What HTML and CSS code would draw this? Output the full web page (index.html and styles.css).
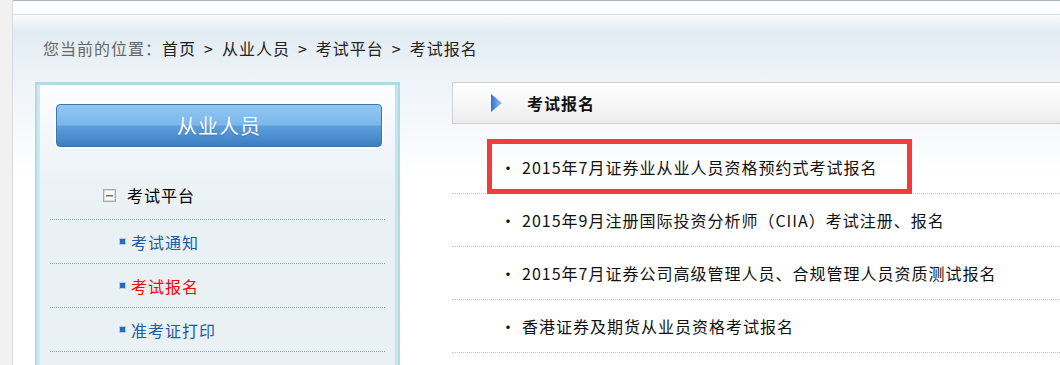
FILE: index.html
```html
<!DOCTYPE html>
<html>
  <head>
    <meta charset="utf-8">
    <title>考试报名</title>
    <link rel="stylesheet" href="styles.css">
  </head>
  <body>
    <div class="page">
      <div class="side-strip"></div>
      <div class="main">
        <div class="top-bar"></div>
        <div class="content">
          <div class="crumbs">
            <span class="crumbs-label">您当前的位置：</span>首页<span class="sep">&gt;</span>从业人员<span class="sep">&gt;</span>考试平台<span class="sep">&gt;</span>考试报名
          </div>
          <div class="columns">
            <div class="side-panel">
              <div class="panel-title">从业人员</div>
              <ul class="menu">
                <li class="menu-group">
                  <svg class="minus-icon" width="13" height="13" viewBox="0 0 13 13">
                    <rect x="0.5" y="0.5" width="12" height="12" fill="#fafafa" stroke="#a9a9a9"/>
                    <rect x="1.5" y="1.5" width="10" height="10" fill="none" stroke="#dcdcdc"/>
                    <rect x="3" y="6" width="7" height="1.5" fill="#6f6f6f"/>
                  </svg>
                  考试平台
                </li>
                <li class="menu-item"><span class="square"></span>考试通知</li>
                <li class="menu-item active"><span class="square"></span>考试报名</li>
                <li class="menu-item"><span class="square"></span>准考证打印</li>
              </ul>
            </div>
            <div class="content-col">
              <div class="col-header">
                <svg class="arrow" width="11" height="18" viewBox="0 0 11 18">
                  <defs>
                    <linearGradient id="arrowFill" x1="0" y1="0" x2="1" y2="0">
                      <stop offset="0" stop-color="#3470cc"/>
                      <stop offset="1" stop-color="#9ec2f2"/>
                    </linearGradient>
                  </defs>
                  <polygon points="0,0 11,9 0,18" fill="url(#arrowFill)"/>
                </svg>
                <span class="col-title">考试报名</span>
              </div>
              <ul class="news-list">
                <li class="news-row">
                  <span class="dot">·</span>2015年7月证券业从业人员资格预约式考试报名
                  <span class="mark"></span>
                </li>
                <li class="news-row"><span class="dot">·</span>2015年9月注册国际投资分析师（CIIA）考试注册、报名</li>
                <li class="news-row"><span class="dot">·</span>2015年7月证券公司高级管理人员、合规管理人员资质测试报名</li>
                <li class="news-row"><span class="dot">·</span>香港证券及期货从业员资格考试报名</li>
              </ul>
            </div>
          </div>
        </div>
      </div>
    </div>
  </body>
</html>
```

FILE: styles.css
```css
html,
body {
  margin: 0;
  padding: 0;
  overflow: hidden;
  background-color: #fff;
  font-family: "Noto Sans CJK SC", "Noto Sans", sans-serif;
  font-size: 16px;
  color: #222;
}

ul {
  margin: 0;
  padding: 0;
  list-style: none;
}

.page {
  display: flex;
  min-height: 365px;
}

.side-strip {
  width: 12px;
  flex-shrink: 0;
  background-color: #f1f1f1;
  border-right: 1px solid #dadada;
}

.main {
  flex: 1;
  min-width: 0;
  border-top: 1px solid #a8b7c3;
}

.top-bar {
  height: 13px;
  background-color: #fff;
  border-bottom: 1px solid #d4dce2;
}

.content {
  background: linear-gradient(to bottom, #f9fbfd 0, #e0ebf2 18px, #eaf1f6 45px, #f1f5f9 80px, #f7f9fb 120px, #fff 160px);
  padding-bottom: 40px;
}

.crumbs {
  padding: 22px 0 0 30px;
  height: 22px;
  line-height: 22px;
  margin-bottom: 23px;
  letter-spacing: 1px;
  color: #222;
  white-space: nowrap;
}

.crumbs-label {
  color: #666;
}

.sep {
  margin: 0 8px;
}

.columns {
  display: flex;
  padding-left: 22px;
  align-items: flex-start;
}

/* left panel */

.side-panel {
  width: 365px;
  min-height: 300px;
  box-sizing: border-box;
  flex-shrink: 0;
  border-style: solid;
  border-color: #b1dae6;
  border-width: 3px 2px 0;
  box-shadow: inset 3px 0 0 #cde9f0, inset -3px 0 0 #c4e5ee;
  background: linear-gradient(to bottom, #fdfefe 0, #f3f7fa 50px, #ebf2f6 100px, #e9f1f5 140px);
}

.panel-title {
  margin: 19px 16px 0 19px;
  height: 41px;
  line-height: 41px;
  text-align: center;
  color: #fff;
  font-size: 20px;
  letter-spacing: 1px;
  border: 1px solid #3b77b0;
  border-radius: 4px;
  background: linear-gradient(to bottom, #92c8f2 0, #7ab7ea 48%, #5c9fdb 52%, #3d7ec2 100%);
  box-shadow: 0 0 0 2px rgba(255, 255, 255, 0.75);
  text-shadow: 0 1px 1px rgba(30, 80, 140, 0.35);
}

.menu {
  margin: 29px 13px 0 13px;
}

.menu-group {
  display: flex;
  align-items: center;
  padding: 9px 0 14px 53px;
  line-height: 20px;
  color: #000;
  letter-spacing: 1px;
  border-bottom: 1px dotted #8aa3b3;
}

.minus-icon {
  margin-right: 11px;
}

.menu-item {
  display: flex;
  align-items: center;
  height: 43px;
  padding-left: 70px;
  color: #1f5ba7;
  letter-spacing: 1px;
  border-bottom: 1px dotted #8aa3b3;
}

.menu-item.active {
  color: #ff0000;
}

.square {
  width: 5px;
  height: 5px;
  margin-right: 6px;
  background-color: #2a6cbb;
  box-shadow: 0 0 0 1px #b4cce7;
}

/* right column */

.content-col {
  flex: 1;
  margin-left: 52px;
  margin-right: -20px;
}

.col-header {
  display: flex;
  align-items: center;
  height: 40px;
  border: 1px solid #d0d0d0;
  background: linear-gradient(to bottom, #ffffff 0, #f7f7f7 50%, #ececec 100%);
}

.arrow {
  margin-left: 38px;
  margin-right: 25px;
}

.col-title {
  font-weight: bold;
  letter-spacing: 1px;
  color: #111;
}

.news-list {
  margin-top: 17px;
}

.news-row {
  position: relative;
  display: flex;
  align-items: center;
  height: 52px;
  padding-left: 48px;
  color: #111;
  letter-spacing: 1px;
  white-space: nowrap;
  border-bottom: 1px dotted #c4c4c4;
}

.dot {
  width: 22px;
  flex-shrink: 0;
}

.mark {
  position: absolute;
  left: 35px;
  top: -2px;
  width: 425px;
  height: 55px;
  box-sizing: border-box;
  border: 5px solid #f23b3b;
}
```
